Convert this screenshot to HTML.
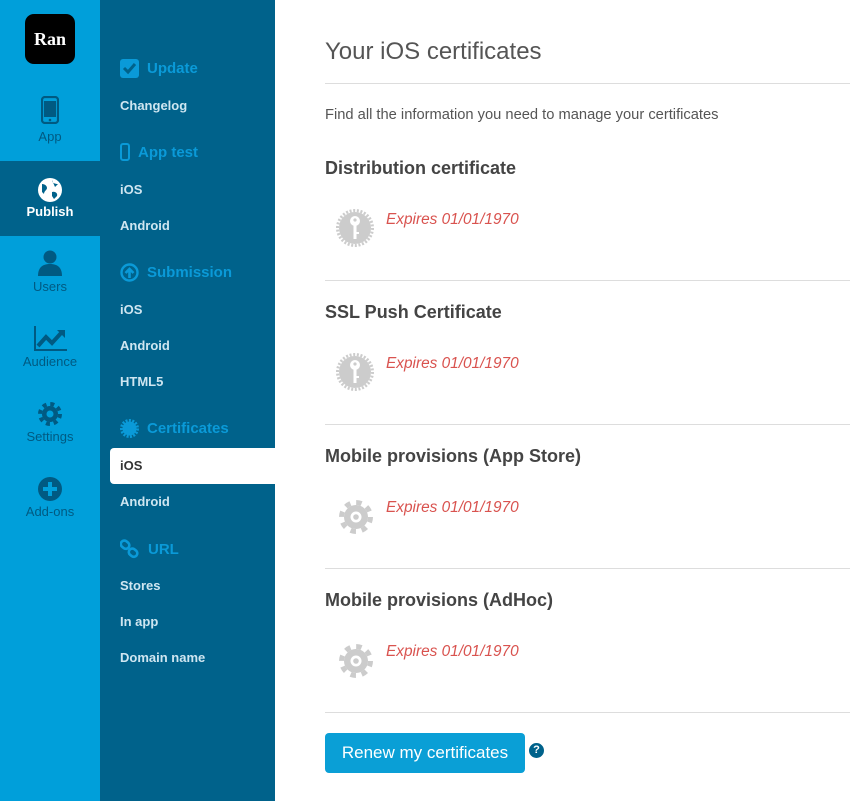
<!DOCTYPE html>
<html><head><meta charset="utf-8"><style>
*{margin:0;padding:0;box-sizing:border-box}
body{width:850px;height:801px;overflow:hidden;font-family:"Liberation Sans",sans-serif;background:#fff;position:relative}
.a{position:absolute}
#l{left:0;top:0;width:100px;height:801px;background:#009fda}
#s{left:100px;top:0;width:175px;height:801px;background:#00628b}
.ni{position:absolute;left:0;width:100px;text-align:center;font-size:13px;color:#005a82}
.sh{position:absolute;left:20px;font-size:15px;color:#0a9ad8;font-weight:bold;display:flex;align-items:center;gap:8px}
.si{position:absolute;left:20px;font-size:13px;color:#cfe6f1;font-weight:bold}
h2{position:absolute;left:325px;font-size:18px;color:#444;font-weight:bold}
.ex{position:absolute;left:386px;font-size:15.4px;color:#d9534f;font-style:italic}
.hr{position:absolute;left:325px;width:525px;height:1px;background:#ddd}
</style></head><body>
<div id="l" class="a">
 <div class="a" style="left:25px;top:14px;width:50px;height:50px;background:#000;border-radius:9px;color:#fff;font-family:'Liberation Serif',serif;font-weight:bold;font-size:18px;line-height:50px;text-align:center">Ran</div>
 <svg class="a" style="left:41px;top:96px" width="18" height="28" viewBox="0 0 18 28"><rect x="1" y="1" width="16" height="26" rx="3" fill="none" stroke="#005a82" stroke-width="2.2"/><rect x="3" y="5" width="12" height="16" fill="#005a82"/><circle cx="9" cy="24" r="1.3" fill="#005a82"/></svg>
 <div class="ni" style="top:129px">App</div>
 <div class="a" style="left:0;top:161px;width:100px;height:75px;background:#00628b"></div>
 <svg class="a" style="left:37px;top:177px" width="26" height="26" viewBox="0 0 26 26"><circle cx="13" cy="13" r="12" fill="#fff"/><path d="M5 7c3 0 5 2 5 4s-3 3-3 6l-2-2zM15 3c0 3 3 4 6 4l-3 3zM15 15c3-1 6 1 5 4l-3 3-2-3z" fill="#00628b"/></svg>
 <div class="ni" style="top:204px;color:#fff;font-weight:bold">Publish</div>
 <svg class="a" style="left:38px;top:250px" width="24" height="26" viewBox="0 0 24 26"><circle cx="12" cy="7" r="6.5" fill="#005a82"/><path d="M0 26c0-9 5-12 12-12s12 3 12 12z" fill="#005a82"/></svg>
 <div class="ni" style="top:279px">Users</div>
 <svg class="a" style="left:33px;top:326px" width="34" height="26" viewBox="0 0 34 26"><path d="M2 0v24h32" stroke="#005a82" stroke-width="2" fill="none"/><path d="M5 20l8-9 6 6 10-11" stroke="#005a82" stroke-width="4" fill="none"/><path d="M24 4h8v8z" fill="#005a82"/></svg>
 <div class="ni" style="top:354px">Audience</div>
 <svg class="a" style="left:38px;top:402px" width="24" height="24" viewBox="0 0 24 24"><circle cx="12" cy="12" r="8" fill="#005a82"/><circle cx="12" cy="12" r="10" fill="none" stroke="#005a82" stroke-width="4" stroke-dasharray="4 3.85"/><circle cx="12" cy="12" r="3.5" fill="#009fda"/></svg>
 <div class="ni" style="top:429px">Settings</div>
 <svg class="a" style="left:38px;top:477px" width="24" height="24" viewBox="0 0 24 24"><circle cx="12" cy="12" r="12" fill="#005a82"/><path d="M12 5v14M5 12h14" stroke="#009fda" stroke-width="4"/></svg>
 <div class="ni" style="top:504px">Add-ons</div>
</div>
<div id="s" class="a">
 <div class="sh" style="top:59px"><svg width="19" height="19" viewBox="0 0 19 19"><rect width="19" height="19" rx="3" fill="#0a9ad8"/><path d="M4 9l4 4 7-8" stroke="#00628b" stroke-width="3" fill="none"/></svg>Update</div>
 <div class="si" style="top:98px">Changelog</div>
 <div class="sh" style="top:143px"><svg width="10" height="18" viewBox="0 0 10 18"><rect x="1" y="1" width="8" height="16" rx="2" fill="none" stroke="#0a9ad8" stroke-width="2"/></svg>App test</div>
 <div class="si" style="top:182px">iOS</div>
 <div class="si" style="top:218px">Android</div>
 <div class="sh" style="top:263px"><svg width="19" height="19" viewBox="0 0 19 19"><circle cx="9.5" cy="9.5" r="8" fill="none" stroke="#0a9ad8" stroke-width="2.4"/><path d="M9.5 15V6M5.5 10l4-4 4 4" stroke="#0a9ad8" stroke-width="2.6" fill="none"/></svg>Submission</div>
 <div class="si" style="top:302px">iOS</div>
 <div class="si" style="top:338px">Android</div>
 <div class="si" style="top:374px">HTML5</div>
 <div class="sh" style="top:419px"><svg width="19" height="19" viewBox="0 0 19 19"><circle cx="9.5" cy="9.5" r="7" fill="#0a9ad8"/><circle cx="9.5" cy="9.5" r="8" fill="none" stroke="#0a9ad8" stroke-width="3" stroke-dasharray="2 1.35"/></svg>Certificates</div>
 <div class="a" style="left:10px;top:448px;width:165px;height:36px;background:#fff;border-radius:4px 0 0 4px"></div>
 <div class="si" style="top:458px;color:#333">iOS</div>
 <div class="si" style="top:494px">Android</div>
 <div class="sh" style="top:539px"><svg width="20" height="20" viewBox="0 0 20 20"><rect x="1" y="2" width="9" height="7" rx="3.5" transform="rotate(40 5 5)" fill="none" stroke="#0a9ad8" stroke-width="2.6"/><rect x="9" y="10" width="9" height="7" rx="3.5" transform="rotate(40 13 13)" fill="none" stroke="#0a9ad8" stroke-width="2.6"/></svg>URL</div>
 <div class="si" style="top:578px">Stores</div>
 <div class="si" style="top:614px">In app</div>
 <div class="si" style="top:650px">Domain name</div>
</div>
<div class="a" style="left:325px;top:38px;font-size:24px;color:#555">Your iOS certificates</div>
<div class="hr" style="top:83px"></div>
<div class="a" style="left:325px;top:107px;font-size:14.7px;color:#555">Find all the information you need to manage your certificates</div>

<h2 style="top:158px">Distribution certificate</h2>
<svg class="a" style="left:336px;top:209px" width="38" height="38" viewBox="0 0 38 38"><circle cx="19" cy="19" r="16" fill="#ccc"/><circle cx="19" cy="19" r="17.5" fill="none" stroke="#ccc" stroke-width="3" stroke-dasharray="2 1.66"/><circle cx="19" cy="12" r="5" fill="#fff"/><rect x="17.5" y="14" width="3" height="16" fill="#fff"/><rect x="20" y="23" width="3" height="2" fill="#fff"/><circle cx="19" cy="11" r="1.6" fill="#ccc"/></svg>
<div class="ex" style="top:211px">Expires 01/01/1970</div>
<div class="hr" style="top:280px"></div>

<h2 style="top:302px">SSL Push Certificate</h2>
<svg class="a" style="left:336px;top:353px" width="38" height="38" viewBox="0 0 38 38"><circle cx="19" cy="19" r="16" fill="#ccc"/><circle cx="19" cy="19" r="17.5" fill="none" stroke="#ccc" stroke-width="3" stroke-dasharray="2 1.66"/><circle cx="19" cy="12" r="5" fill="#fff"/><rect x="17.5" y="14" width="3" height="16" fill="#fff"/><rect x="20" y="23" width="3" height="2" fill="#fff"/><circle cx="19" cy="11" r="1.6" fill="#ccc"/></svg>
<div class="ex" style="top:355px">Expires 01/01/1970</div>
<div class="hr" style="top:424px"></div>

<h2 style="top:446px">Mobile provisions (App Store)</h2>
<svg class="a" style="left:338px;top:499px" width="36" height="36" viewBox="0 0 36 36"><circle cx="18" cy="18" r="12" fill="#ccc"/><circle cx="18" cy="18" r="14.5" fill="none" stroke="#ccc" stroke-width="5" stroke-dasharray="5.5 5.9"/><circle cx="18" cy="18" r="5.5" fill="#fff"/><circle cx="18" cy="18" r="2.8" fill="#ccc"/></svg>
<div class="ex" style="top:499px">Expires 01/01/1970</div>
<div class="hr" style="top:568px"></div>

<h2 style="top:590px">Mobile provisions (AdHoc)</h2>
<svg class="a" style="left:338px;top:643px" width="36" height="36" viewBox="0 0 36 36"><circle cx="18" cy="18" r="12" fill="#ccc"/><circle cx="18" cy="18" r="14.5" fill="none" stroke="#ccc" stroke-width="5" stroke-dasharray="5.5 5.9"/><circle cx="18" cy="18" r="5.5" fill="#fff"/><circle cx="18" cy="18" r="2.8" fill="#ccc"/></svg>
<div class="ex" style="top:643px">Expires 01/01/1970</div>
<div class="hr" style="top:712px"></div>

<div class="a" style="left:325px;top:733px;width:200px;height:40px;background:#0a9fd6;border-radius:4px;color:#fff;font-size:17px;line-height:40px;text-align:center">Renew my certificates</div>
<div class="a" style="left:529px;top:743px;width:15px;height:15px;border-radius:50%;background:#00628b;color:#fff;font-size:11px;font-weight:bold;line-height:15px;text-align:center">?</div>
</body></html>
